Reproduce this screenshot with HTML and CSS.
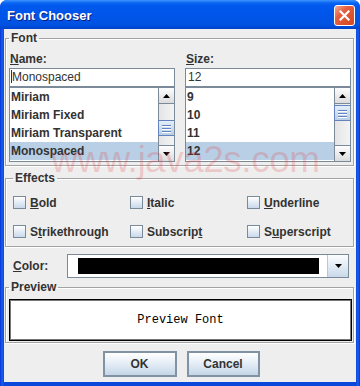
FILE: index.html
```html
<!DOCTYPE html>
<html lang="en">
<head>
    <meta charset="UTF-8">
    <meta name="viewport" content="width=device-width, initial-scale=1.0">
    <title>Font Chooser</title>
    <link rel="stylesheet" href="styles.css">
</head>
<body>
    <div class="window">
        <div class="titlebar">
            <span class="title">Font Chooser</span>
            <span class="close">
                <svg width="11" height="11" viewBox="0 0 11 11"><path d="M1.5 1.5 L9.5 9.5 M9.5 1.5 L1.5 9.5" stroke="#fff" stroke-width="2.2" stroke-linecap="square"/></svg>
            </span>
        </div>
        <div class="content">
            <fieldset class="group font-group">
                <legend>Font</legend>
                <div class="font-cols">
                    <div class="col">
                        <label class="lbl"><u>N</u>ame:</label>
                        <div class="field"><span class="caret"></span>Monospaced</div>
                        <div class="list">
                            <ul class="items">
                                <li>Miriam</li>
                                <li>Miriam Fixed</li>
                                <li>Miriam Transparent</li>
                                <li class="sel">Monospaced</li>
                            </ul>
                            <div class="scrollbar">
                                <div class="sb-btn up"><svg width="7" height="4"><polygon points="0,4 7,4 3.5,0" fill="#000"/></svg></div>
                                <div class="sb-track"><div class="sb-thumb" style="margin-top: 16px"><i></i><i></i><i></i></div></div>
                                <div class="sb-btn down"><svg width="7" height="4"><polygon points="0,0 7,0 3.5,4" fill="#000"/></svg></div>
                            </div>
                        </div>
                    </div>
                    <div class="col">
                        <label class="lbl"><u>S</u>ize:</label>
                        <div class="field">12</div>
                        <div class="list">
                            <ul class="items">
                                <li>9</li>
                                <li>10</li>
                                <li>11</li>
                                <li class="sel">12</li>
                            </ul>
                            <div class="scrollbar">
                                <div class="sb-btn up"><svg width="7" height="4"><polygon points="0,4 7,4 3.5,0" fill="#000"/></svg></div>
                                <div class="sb-track"><div class="sb-thumb" style="margin-top: 1px"><i></i><i></i><i></i></div></div>
                                <div class="sb-btn down"><svg width="7" height="4"><polygon points="0,0 7,0 3.5,4" fill="#000"/></svg></div>
                            </div>
                        </div>
                    </div>
                </div>
            </fieldset>

            <fieldset class="group effects">
                <legend>Effects</legend>
                <div class="checks">
                    <label class="check"><span class="box"></span><span><u>B</u>old</span></label>
                    <label class="check"><span class="box"></span><span><u>I</u>talic</span></label>
                    <label class="check"><span class="box"></span><span><u>U</u>nderline</span></label>
                    <label class="check"><span class="box"></span><span>S<u>t</u>rikethrough</span></label>
                    <label class="check"><span class="box"></span><span>Subscrip<u>t</u></span></label>
                    <label class="check"><span class="box"></span><span>S<u>u</u>perscript</span></label>
                </div>
            </fieldset>

            <div class="color-row">
                <label class="lbl color-lbl"><u>C</u>olor:</label>
                <div class="combo">
                    <div class="combo-value"><span class="swatch"></span></div>
                    <div class="combo-btn"><svg width="7" height="4"><polygon points="0,0 7,0 3.5,4" fill="#000"/></svg></div>
                </div>
            </div>

            <fieldset class="group preview">
                <legend>Preview</legend>
                <div class="preview-box">Preview Font</div>
            </fieldset>

            <div class="buttons">
                <button class="btn ok">OK</button>
                <button class="btn cancel">Cancel</button>
            </div>

            <div class="watermark">www.java2s.com</div>
        </div>
    </div>
</body>
</html>
```

FILE: styles.css
```css
body {
    margin: 0;
    background-color: #fff;
    font-family: "Liberation Sans", Arial, sans-serif;
}

.window {
    width: 360px;
    height: 386px;
    display: flex;
    flex-direction: column;
    background: linear-gradient(90deg, #0831d9 0, #1660ee 2px, #0a48dc 4px, #0a48dc 356px, #1660ee 358px, #0831d9 360px);
    border-radius: 7px 7px 0 0;
    overflow: hidden;
}

.titlebar {
    height: 29px;
    flex: none;
    box-sizing: border-box;
    display: flex;
    align-items: center;
    justify-content: space-between;
    padding: 2px 5px 0 7px;
    background: linear-gradient(#3d95ff 0, #0a64f0 3px, #0058ee 6px, #0055e8 55%, #0052e2 85%, #0042c8 100%);
}

.title {
    color: #fff;
    font-weight: bold;
    font-size: 13px;
    text-shadow: 1px 1px 0 #0a1d80;
}

.close {
    width: 21px;
    height: 21px;
    box-sizing: border-box;
    display: flex;
    align-items: center;
    justify-content: center;
    border: 1px solid #fff;
    border-radius: 3px;
    background: linear-gradient(135deg, #f4ab95 0, #e6603f 35%, #d4461f 100%);
}

.content {
    flex: 1;
    margin: 0 4px 4px;
    padding: 0 2px 0 1px;
    display: flex;
    flex-direction: column;
    background-color: #eeeeee;
    color: #333;
    font-size: 12px;
    position: relative;
}

/* titled group boxes */
.group {
    margin: 0;
    min-width: 0;
    border: 1px solid #a3a3a3;
    box-shadow: 1px 1px 0 #fff, inset 1px 1px 0 #fff;
}

.group legend {
    padding: 0 2px;
    font-weight: bold;
    font-size: 12px;
    line-height: 14px;
    color: #333;
}

.font-group {
    margin-top: 2px;
    padding: 7px 2px 3px 3px;
}

.font-cols {
    display: grid;
    grid-template-columns: 166px 166px;
    column-gap: 10px;
}

.lbl {
    display: block;
    padding-left: 1px;
    font-weight: bold;
    line-height: 14px;
}

.field {
    margin-top: 2px;
    height: 19px;
    box-sizing: border-box;
    border: 1px solid #7a8a99;
    background-color: #fff;
    padding-left: 2px;
    line-height: 17px;
}

.caret {
    display: inline-block;
    width: 1px;
    height: 13px;
    margin-left: -1px;
    vertical-align: -2px;
    background-color: #333;
}

.list {
    height: 75px;
    box-sizing: border-box;
    border: 1px solid #7a8a99;
    background-color: #fff;
    display: flex;
}

.items {
    flex: 1;
    margin: 0;
    padding: 0;
    list-style: none;
}

.items li {
    height: 18px;
    line-height: 18px;
    padding-left: 1px;
    font-weight: bold;
}

.items li.sel {
    background-color: #b8cfe5;
}

.scrollbar {
    width: 16px;
    display: flex;
    flex-direction: column;
    background-color: #eeeeee;
}

.sb-btn {
    height: 16px;
    box-sizing: border-box;
    display: flex;
    align-items: center;
    justify-content: center;
    border: 1px solid #7a8a99;
    border-right: none;
    background: linear-gradient(#fdfdfd, #dcdcdc);
}

.sb-btn.up {
    border-top: none;
}

.sb-btn.down {
    border-bottom: none;
}

.sb-track {
    flex: 1;
    border-left: 1px solid #7a8a99;
    background: linear-gradient(90deg, #e4e4e4, #f4f4f4);
}

.sb-thumb {
    height: 16px;
    box-sizing: border-box;
    margin-left: -1px;
    border: 1px solid #6382bf;
    border-right: none;
    background: linear-gradient(#e4eefa, #b8cfe5);
    display: flex;
    flex-direction: column;
    align-items: center;
    justify-content: center;
    gap: 2px;
}

.sb-thumb i {
    display: block;
    width: 9px;
    height: 1px;
    background-color: #6382bf;
    box-shadow: 0 1px 0 #fff;
}

/* effects */
.effects {
    margin-top: 5px;
    padding: 3px 0 0 7px;
}

.checks {
    display: grid;
    grid-template-columns: repeat(3, 117px);
    grid-auto-rows: 29px;
}

.check {
    display: flex;
    align-items: center;
    gap: 4px;
    font-weight: bold;
}

.box {
    width: 13px;
    height: 13px;
    box-sizing: border-box;
    border: 1px solid #7a8a99;
    background: linear-gradient(#ffffff, #c8d9ea);
}

/* color row */
.color-row {
    margin-top: 7px;
    height: 24px;
    display: flex;
    align-items: center;
    padding-left: 8px;
}

.color-lbl {
    width: 54px;
    padding-left: 0;
}

.combo {
    width: 282px;
    height: 24px;
    box-sizing: border-box;
    border: 1px solid #7a8a99;
    display: flex;
}

.combo-value {
    flex: 1;
    background-color: #fff;
    padding: 3px 8px 3px 10px;
    display: flex;
}

.swatch {
    flex: 1;
    background-color: #000;
}

.combo-btn {
    width: 21px;
    box-sizing: border-box;
    border-left: 1px solid #b7c8da;
    display: flex;
    align-items: center;
    justify-content: center;
    background: linear-gradient(#fcfdfe, #c9d9ea);
}

/* preview */
.preview {
    margin-top: 2px;
    padding: 5px 1px 1px 3px;
}

.preview-box {
    height: 42px;
    box-sizing: border-box;
    border: 1px solid #000;
    outline: 1px solid #777;
    outline-offset: -2px;
    background-color: #fff;
    display: flex;
    align-items: center;
    justify-content: center;
    font-family: "Liberation Mono", "Courier New", monospace;
    font-size: 12px;
    color: #000;
}

/* buttons */
.buttons {
    margin-top: 8px;
    padding-left: 3px;
    display: flex;
    justify-content: center;
    gap: 10px;
}

.btn {
    width: 73px;
    height: 26px;
    box-sizing: border-box;
    border: 2px solid #8192a4;
    background: linear-gradient(#ffffff, #e6eef6 45%, #c5d6e8);
    font-family: "Liberation Sans", Arial, sans-serif;
    font-weight: bold;
    font-size: 12px;
    color: #333;
    cursor: pointer;
}

.btn.ok {
    width: 74px;
}

.watermark {
    position: absolute;
    left: 47px;
    top: 112px;
    font-size: 37px;
    line-height: 37px;
    letter-spacing: -0.5px;
    color: rgba(230, 60, 60, 0.22);
    pointer-events: none;
    white-space: nowrap;
}
```
